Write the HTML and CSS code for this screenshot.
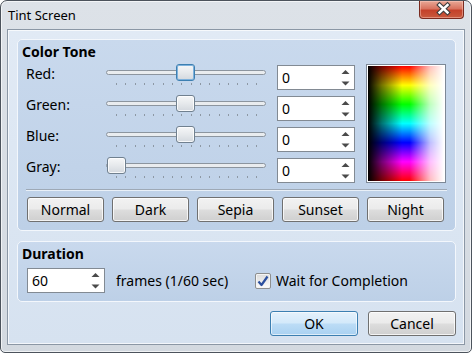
FILE: index.html
```html
<!DOCTYPE html>
<html>
<head>
<meta charset="utf-8">
<link rel="stylesheet" href="styles.css">
</head>
<body>
<div class="window">
  <div class="titlebar">
    <span class="title">Tint Screen</span>
    <button class="close" aria-label="Close">
      <svg width="45" height="18" viewBox="0 0 45 18">
        <path d="M20.5 5 L28.5 12.5 M28.5 5 L20.5 12.5" stroke="#3d3d3d" stroke-width="4.6" stroke-linecap="square" fill="none"/>
        <path d="M20.5 5 L28.5 12.5 M28.5 5 L20.5 12.5" stroke="#ffffff" stroke-width="2.4" stroke-linecap="square" fill="none"/>
      </svg>
    </button>
  </div>
  <div class="client">
    <section class="group tone">
      <div class="group-title">Color Tone</div>
      <div class="tone-grid">
        <div class="label">Red:</div>
        <div class="slider">
          <div class="track"></div>
          <div class="ticks"><i></i><i></i><i></i><i></i><i></i><i></i><i></i><i></i><i></i><i></i><i></i><i></i><i></i><i></i><i></i><i></i></div>
          <div class="thumb focus" style="left:70px"></div>
        </div>
        <div class="spin"><span class="val">0</span><svg class="arrows" width="9" height="23" viewBox="0 0 9 23"><polygon points="0.5,8 4.5,4 8.5,8" fill="#4a4a4a"/><polygon points="0.5,15.5 8.5,15.5 4.5,19.5" fill="#4a4a4a"/></svg></div>

        <div class="label">Green:</div>
        <div class="slider">
          <div class="track"></div>
          <div class="ticks"><i></i><i></i><i></i><i></i><i></i><i></i><i></i><i></i><i></i><i></i><i></i><i></i><i></i><i></i><i></i><i></i></div>
          <div class="thumb" style="left:70px"></div>
        </div>
        <div class="spin"><span class="val">0</span><svg class="arrows" width="9" height="23" viewBox="0 0 9 23"><polygon points="0.5,8 4.5,4 8.5,8" fill="#4a4a4a"/><polygon points="0.5,15.5 8.5,15.5 4.5,19.5" fill="#4a4a4a"/></svg></div>

        <div class="label">Blue:</div>
        <div class="slider">
          <div class="track"></div>
          <div class="ticks"><i></i><i></i><i></i><i></i><i></i><i></i><i></i><i></i><i></i><i></i><i></i><i></i><i></i><i></i><i></i><i></i></div>
          <div class="thumb" style="left:70px"></div>
        </div>
        <div class="spin"><span class="val">0</span><svg class="arrows" width="9" height="23" viewBox="0 0 9 23"><polygon points="0.5,8 4.5,4 8.5,8" fill="#4a4a4a"/><polygon points="0.5,15.5 8.5,15.5 4.5,19.5" fill="#4a4a4a"/></svg></div>

        <div class="label">Gray:</div>
        <div class="slider">
          <div class="track"></div>
          <div class="ticks"><i></i><i></i><i></i><i></i><i></i><i></i><i></i><i></i><i></i><i></i><i></i><i></i><i></i><i></i><i></i><i></i></div>
          <div class="thumb" style="left:1px"></div>
        </div>
        <div class="spin"><span class="val">0</span><svg class="arrows" width="9" height="23" viewBox="0 0 9 23"><polygon points="0.5,8 4.5,4 8.5,8" fill="#4a4a4a"/><polygon points="0.5,15.5 8.5,15.5 4.5,19.5" fill="#4a4a4a"/></svg></div>

        <div class="preview"><div class="spectrum"></div></div>
      </div>
      <div class="sep"></div>
      <div class="presets">
        <button class="btn">Normal</button>
        <button class="btn">Dark</button>
        <button class="btn">Sepia</button>
        <button class="btn">Sunset</button>
        <button class="btn">Night</button>
      </div>
    </section>
    <section class="group duration">
      <div class="group-title">Duration</div>
      <div class="dur-row">
        <div class="spin"><span class="val">60</span><svg class="arrows" width="9" height="23" viewBox="0 0 9 23"><polygon points="0.5,8 4.5,4 8.5,8" fill="#4a4a4a"/><polygon points="0.5,15.5 8.5,15.5 4.5,19.5" fill="#4a4a4a"/></svg></div>
        <span class="frames">frames (1/60 sec)</span>
        <label class="check">
          <span class="box"><svg width="14" height="14" viewBox="0 0 14 14"><path d="M2.5 7.5 L5.5 11 L11.5 2.5" stroke="#2b4f9e" stroke-width="2.2" fill="none" stroke-linejoin="round"/></svg></span>
          <span>Wait for Completion</span>
        </label>
      </div>
    </section>
    <div class="actions">
      <button class="btn wide default">OK</button>
      <button class="btn wide">Cancel</button>
    </div>
  </div>
</div>
</body>
</html>
```

FILE: styles.css
```css
* { box-sizing: border-box; }
html, body { margin: 0; padding: 0; background: #ffffff; }
body {
  font-family: "Noto Sans", "Open Sans", sans-serif;
  font-size: 14px;
  color: #000;
}
.window {
  width: 472px;
  height: 353px;
  border: 1px solid #4c535c;
  border-radius: 7px 7px 5px 5px;
  background: linear-gradient(#dde2e8, #d3d9e0);
  box-shadow: inset 0 0 0 1px rgba(255,255,255,0.65);
  display: flex;
  flex-direction: column;
}
.titlebar {
  height: 28px;
  display: flex;
  align-items: flex-start;
}
.title {
  font-size: 13px;
  line-height: 16px;
  padding: 6px 0 0 7px;
}
.close {
  margin: 0 7px 0 auto;
  width: 45px;
  height: 18px;
  padding: 0;
  border: 1px solid #7a2a1f;
  border-top: none;
  border-radius: 0 0 4px 4px;
  background: linear-gradient(#e9a896 0%, #d9735f 45%, #c4412a 55%, #c95a3e 100%);
  box-shadow: inset 0 0 0 1px rgba(255,210,200,0.45);
  display: block;
}
.close svg { display: block; margin: -1px 0 0 -1px; }
.client {
  margin: 0 6px;
  height: 316px;
  border: 1px solid #8b97a5;
  background: linear-gradient(#e1eaf5, #d6e2f0);
  box-shadow: inset 0 0 0 1px rgba(255,255,255,0.7);
  padding: 9px 8px 0 9px;
}
.group {
  border: 1px solid #f3f7fc;
  border-radius: 5px;
  background: linear-gradient(#c9d9ed, #bdd0e7);
  padding: 3px 0 8px 0;
}
.group-title {
  font-weight: bold;
  font-size: 14px;
  line-height: 18px;
  padding-left: 4px;
}
.tone-grid {
  margin: 4px 0 0 8px;
  display: grid;
  grid-template-columns: 69px 160px 78px 80px;
  grid-template-rows: repeat(4, 25px);
  column-gap: 11px;
  row-gap: 6px;
}
.label {
  line-height: 18px;
  align-self: start;
}
.slider {
  position: relative;
  height: 25px;
}
.track {
  margin-top: 5px;
  height: 5px;
  border: 1px solid #8c959f;
  border-radius: 3px;
  background: #e9ecef;
}
.ticks {
  margin: 8px 0 0 10px;
  width: 141px;
  height: 2px;
  display: flex;
  justify-content: space-between;
}
.ticks i {
  display: block;
  width: 1px;
  height: 2px;
  background: #8d98a4;
}
.thumb {
  position: absolute;
  top: -1px;
  width: 19px;
  height: 17px;
  border: 1px solid #70808f;
  border-radius: 3px;
  background: linear-gradient(#f6f7f8 0%, #e6e9ec 50%, #d3d8de 100%);
  box-shadow: inset 0 0 0 1px rgba(255,255,255,0.8);
}
.thumb.focus {
  border-color: #3c7fb1;
  box-shadow: inset 0 0 0 1px #7eb1dc;
}
.spin {
  height: 25px;
  border: 1px solid #828a93;
  background: #fff;
  display: flex;
  align-items: flex-start;
}
.spin .val {
  flex: 1;
  padding: 1px 0 0 4px;
  line-height: 22px;
  font-size: 14px;
}
.spin .arrows {
  display: block;
  margin-right: 4px;
}
.preview {
  grid-column: 4;
  grid-row: 1 / span 4;
  align-self: start;
  margin-top: -1px;
  height: 119px;
  border: 1px solid #7d8896;
  background: #fff;
  padding: 1px;
}
.spectrum {
  width: 100%;
  height: 100%;
  background:
    linear-gradient(to right, #000 0%, rgba(0,0,0,0.55) 18%, rgba(0,0,0,0) 45%, rgba(255,255,255,0) 55%, rgba(255,255,255,0.75) 82%, #fff 100%),
    linear-gradient(to bottom, #f00 0%, #ff0 16.7%, #0f0 33.3%, #0ff 50%, #00f 66.7%, #f0f 83.3%, #f00 100%);
}
.sep {
  margin: 6px 8px 0 8px;
  height: 2px;
  border-top: 1px solid #9ea9b6;
  border-bottom: 1px solid #e9f0f8;
}
.presets {
  margin: 6px 0 0 9px;
  display: flex;
  gap: 8px;
}
.btn {
  font-family: "Noto Sans", "Open Sans", sans-serif;
  font-size: 14px;
  color: #000;
  width: 77px;
  height: 25px;
  padding: 0;
  border: 1px solid #707070;
  border-radius: 3px;
  background: linear-gradient(#f2f2f2 0%, #ebebeb 48%, #dddddd 52%, #cfcfcf 100%);
  box-shadow: inset 0 0 0 1px rgba(255,255,255,0.75);
  line-height: 21px;
}
.btn.wide { width: 88px; }
.btn.default {
  border-color: #3c7fb1;
  background: linear-gradient(#e5f1fb 0%, #d3e9fa 48%, #bcdcf6 52%, #a9d1f1 100%);
  box-shadow: inset 0 0 0 1px rgba(255,255,255,0.6);
}
.duration { margin-top: 10px; }
.dur-row {
  margin: 5px 0 0 9px;
  display: grid;
  grid-template-columns: 78px 128px auto;
  column-gap: 11px;
  align-items: center;
}
.frames { line-height: 18px; }
.check {
  display: flex;
  align-items: center;
  gap: 5px;
  line-height: 18px;
}
.check .box {
  width: 16px;
  height: 16px;
  border: 1px solid #8e8f8f;
  border-radius: 2px;
  background: linear-gradient(#dcdcdc, #fbfbfb);
  box-shadow: inset 0 0 0 1px #f4f4f4;
  display: flex;
  align-items: center;
  justify-content: center;
}
.check .box svg { display: block; }
.actions {
  margin-top: 9px;
  display: flex;
  justify-content: flex-end;
  gap: 10px;
}
```
